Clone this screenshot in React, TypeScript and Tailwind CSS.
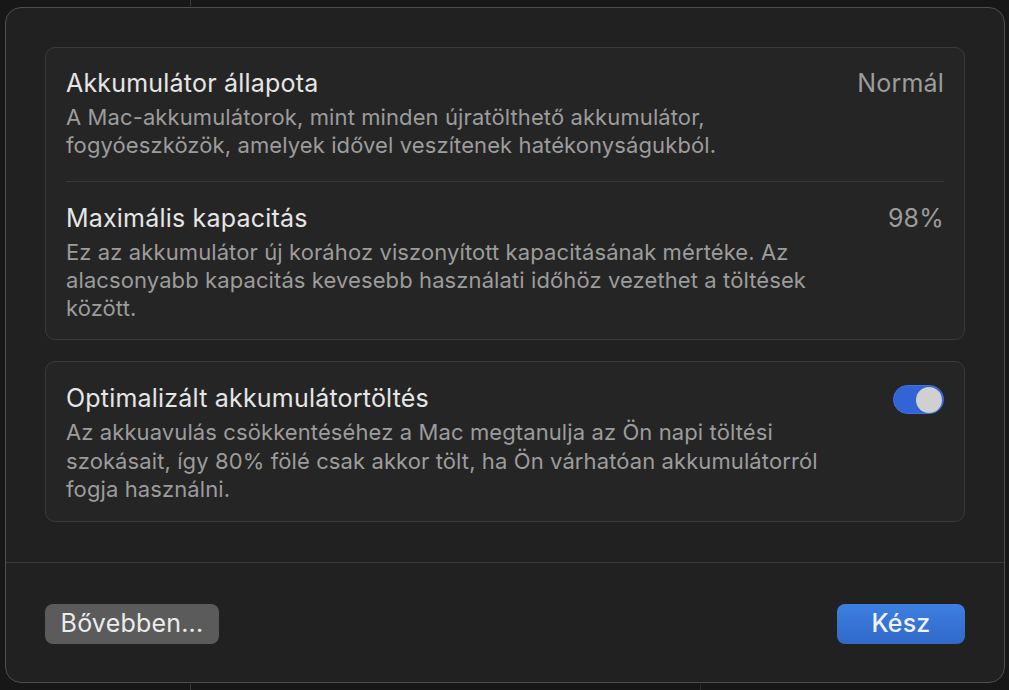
import React from "react";

const font = { fontFamily: "Inter, 'Noto Sans', sans-serif" };

function Row({ title, value, lines }: { title: string; value?: React.ReactNode; lines: string[] }) {
  return (
    <div className="flex items-start justify-between gap-6">
      <div className="flex-1">
        <div className="text-[25px] leading-[30px] tracking-[0.2px] text-[#e6e6e6]">{title}</div>
        <p className="mt-[5px] text-[22px] leading-[28.3px] tracking-[0.1px] text-[#9c9c9c]">
          {lines.map((l, i) => (
            <span key={i} className="block whitespace-nowrap">
              {l}
            </span>
          ))}
        </p>
      </div>
      {value}
    </div>
  );
}

function Value({ children }: { children: React.ReactNode }) {
  return <span className="text-[25px] leading-[30px] tracking-[0.2px] text-[#9c9c9c]">{children}</span>;
}

export default function App() {
  return (
    <div style={font} className="relative h-[690px] w-[1009px] overflow-hidden bg-[#171717] pl-[5px] pt-[7px]">
      {/* háttér részletek */}
      <div className="absolute left-[190px] top-0 h-[6px] w-px bg-[#3a3a3a]" />
      <div className="absolute left-[190px] bottom-0 h-[6px] w-px bg-[#3a3a3a]" />
      <div className="absolute left-[700px] bottom-0 h-[6px] w-px bg-[#2c2c2c]" />

      <div className="flex h-[676px] w-[1000px] flex-col rounded-[16px] border border-[#4e4e4e] bg-[#212121]">
        <div className="flex flex-col gap-[21px] px-[39px] pt-[39px]">
          {/* állapot + kapacitás */}
          <div className="rounded-[10px] border border-[#3a3a3a] bg-[#252525] px-[20px] pt-[20px] pb-[17px]">
            <Row
              title="Akkumulátor állapota"
              value={<Value>Normál</Value>}
              lines={[
                "A Mac-akkumulátorok, mint minden újratölthető akkumulátor,",
                "fogyóeszközök, amelyek idővel veszítenek hatékonyságukból.",
              ]}
            />
            <div className="mt-[21px] mb-[21px] h-px bg-[#383838]" />
            <Row
              title="Maximális kapacitás"
              value={<Value>98%</Value>}
              lines={[
                "Ez az akkumulátor új korához viszonyított kapacitásának mértéke. Az",
                "alacsonyabb kapacitás kevesebb használati időhöz vezethet a töltések",
                "között.",
              ]}
            />
          </div>

          {/* optimalizált töltés */}
          <div className="rounded-[10px] border border-[#3a3a3a] bg-[#252525] px-[20px] pt-[21px] pb-[18px]">
            <Row
              title="Optimalizált akkumulátortöltés"
              value={
                <div className="mt-[2px] flex h-[29px] w-[51px] shrink-0 items-center justify-end rounded-full border border-[#3f72e0] bg-[#3264d6] pr-[1px]">
                  <div className="h-[26px] w-[26px] rounded-full bg-[#d0d0d0]" />
                </div>
              }
              lines={[
                "Az akkuavulás csökkentéséhez a Mac megtanulja az Ön napi töltési",
                "szokásait, így 80% fölé csak akkor tölt, ha Ön várhatóan akkumulátorról",
                "fogja használni.",
              ]}
            />
          </div>
        </div>

        <div className="mt-[40px] h-px bg-[#3a3a3a]" />

        <div className="flex items-center justify-between px-[39px] pt-[41px]">
          <button className="h-[40px] w-[174px] rounded-[8px] bg-[#5b5b5b] pb-[2px] text-[25px] leading-none tracking-[0.2px] text-[#ececec]">
            Bővebben...
          </button>
          <button className="h-[40px] w-[128px] rounded-[8px] bg-gradient-to-b from-[#3d7fe1] to-[#3169c9] pb-[2px] text-[25px] font-medium leading-none tracking-[0.2px] text-[#eef3fb]">
            Kész
          </button>
        </div>
      </div>
    </div>
  );
}
